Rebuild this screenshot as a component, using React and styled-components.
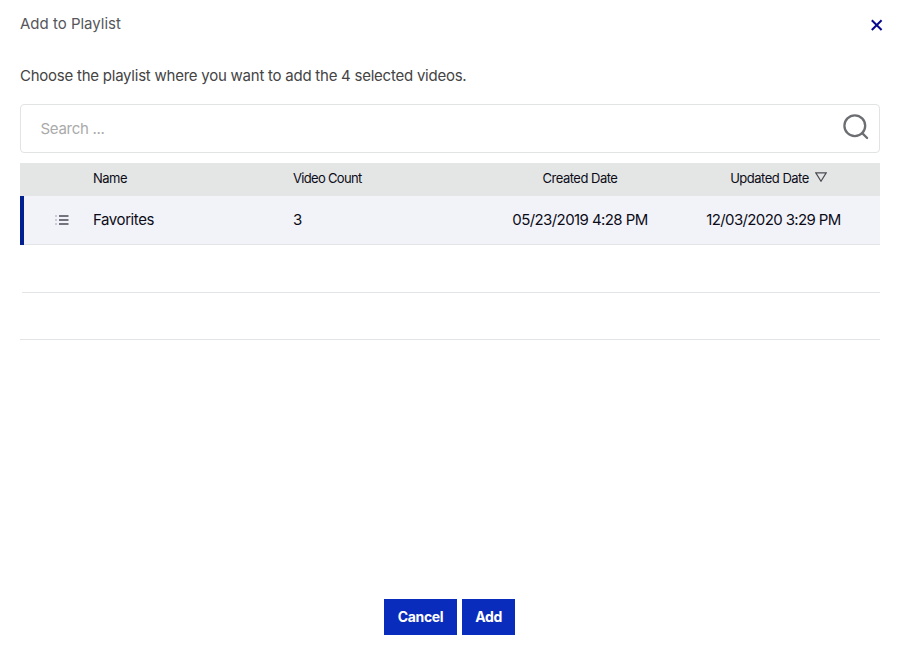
import React from "react";
import styled, { createGlobalStyle } from "styled-components";

const Global = createGlobalStyle`
  * { box-sizing: border-box; }
  body { margin: 0; background: #fff; font-family: Inter, "Liberation Sans", sans-serif; }
`;
const Dialog = styled.main`
  height: 655px;
  padding: 0 20px 20px;
  display: flex;
  flex-direction: column;
`;
const Header = styled.header`
  display: flex;
  justify-content: space-between;
  align-items: flex-start;
  height: 50px;
`;
const Title = styled.h1`
  margin: 14px 0 0;
  font-size: 15px;
  line-height: 20px;
  font-weight: 400;
  color: #56565b;
`;
const CloseButton = styled.button`
  display: flex;
  margin: 18px -4px 0 0;
  padding: 0;
  border: 0;
  background: none;
`;
const Prompt = styled.p`
  margin: 0;
  height: 54px;
  line-height: 52px;
  font-size: 15px;
  letter-spacing: -0.24px;
  color: #444;
`;
const Search = styled.label`
  height: 49px;
  border: 1px solid #e2e3e3;
  border-radius: 4px;
  display: flex;
  align-items: center;
  padding: 0 10px 0 19.5px;
`;
const SearchIcon = styled.svg`
  margin-top: -5px;
`;
const Input = styled.input`
  flex: 1;
  border: 0;
  outline: 0;
  padding: 0;
  font: 15px Inter, sans-serif;
  letter-spacing: -0.3px;
  &::placeholder { color: #aaa; opacity: 1; }
`;
const Table = styled.section`
  margin-top: 10px;
  flex: 1;
`;
const Row = styled.div`
  display: grid;
  grid-template-columns: 73px 200px 190px 194px 203px;
  align-items: center;
  height: ${p => p.$h}px;
  margin-left: ${p => p.$inset || 0}px;
  box-shadow: inset 0 -1px #e3e4e5;
  font-size: 15px;
  color: #0c0c18;
`;
const Head = styled(Row)`
  background: #e4e6e5;
  box-shadow: none;
  font-size: 13px;
  padding-bottom: 3px;
`;
const Selected = styled(Row)`
  background: #f2f3f9;
  box-shadow: inset 4px 0 #001f91, inset 0 -1px #e3e4e5;
  padding-bottom: 2px;
`;
const Cell = styled.span`
  display: flex;
  align-items: center;
  justify-content: ${p => p.$center ? "center" : "flex-start"};
  padding-right: ${p => p.$end || 0}px;
  letter-spacing: ${p => p.$track || 0}px;
  white-space: nowrap;
`;
const ListIcon = styled.svg`
  margin: 0 0 0 35px;
`;
const SortIcon = styled.svg`
  margin: -2px 0 0 6px;
`;
const Footer = styled.footer`
  display: flex;
  justify-content: center;
  gap: 5px;
  padding-right: 1px;
`;
const Button = styled.button`
  border: 0;
  background: #0a2cbd;
  color: #fff;
  height: 36px;
  width: ${p => p.$w}px;
  padding: 0 0 1px;
  font: 700 14px Inter, sans-serif;
  letter-spacing: -0.35px;
`;

export default function App() {
  return (
    <>
      <Global />
      <Dialog>
        <Header>
          <Title>Add to Playlist</Title>
          <CloseButton aria-label="Close">
            <svg width="14" height="14" fill="none" stroke="#08088e" strokeWidth="2">
              <path d="M1.8 2.2l9.8 9.8M11.6 2.2L1.8 12" />
            </svg>
          </CloseButton>
        </Header>
        <Prompt>Choose the playlist where you want to add the 4 selected videos.</Prompt>
        <Search>
          <Input placeholder="Search ..." />
          <SearchIcon width="27" height="27" fill="none" stroke="#6c6e72" strokeWidth="2.3">
            <circle cx="12.8" cy="12.7" r="10.4" />
            <path d="M20.2 20.1l4.9 4.9" strokeLinecap="round" />
          </SearchIcon>
        </Search>
        <Table>
          <Head $h={33}>
            <Cell />
            <Cell $track={-0.5}>Name</Cell>
            <Cell $track={-0.68}>Video Count</Cell>
            <Cell $center $track={-0.5}>Created Date</Cell>
            <Cell $center $track={-0.5}>
              Updated Date
              <SortIcon width="12" height="10" fill="none" stroke="#4c4c54" strokeWidth="1.2">
                <path d="M.8.8h10.4L6 9.2z" />
              </SortIcon>
            </Cell>
          </Head>
          <Selected $h={49}>
            <Cell>
              <ListIcon width="14" height="10">
                <path d="M0 0h2v2H0zM0 4h2v2H0zM0 8h2v2H0z" fill="#cbccd3" />
                <path d="M4 0h9.5v2H4zM4 4h9.5v2H4zM4 8h9.5v2H4z" fill="#74747f" />
              </ListIcon>
            </Cell>
            <Cell $track={-0.42}>Favorites</Cell>
            <Cell>3</Cell>
            <Cell $center $track={-0.58}>05/23/2019 4:28 PM</Cell>
            <Cell $center $end={10} $track={-0.62}>12/03/2020 3:29 PM</Cell>
          </Selected>
          <Row $h={48} $inset={2} />
          <Row $h={47} />
        </Table>
        <Footer>
          <Button $w={73}>Cancel</Button>
          <Button $w={53}>Add</Button>
        </Footer>
      </Dialog>
    </>
  );
}
